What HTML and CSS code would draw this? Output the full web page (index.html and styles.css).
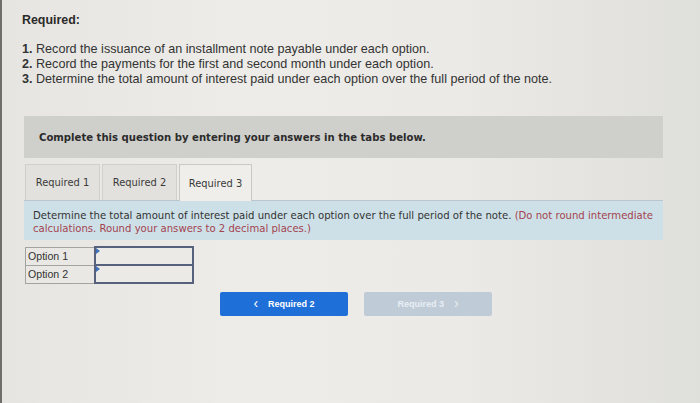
FILE: index.html
```html
<!DOCTYPE html>
<html>
<head>
<meta charset="utf-8">
<link rel="stylesheet" href="styles.css">
</head>
<body>
<div class="page">
  <div class="req-title">Required:</div>
  <ol class="req-list">
    <li><span class="num">1.</span>Record the issuance of an installment note payable under each option.</li>
    <li><span class="num">2.</span>Record the payments for the first and second month under each option.</li>
    <li><span class="num">3.</span>Determine the total amount of interest paid under each option over the full period of the note.</li>
  </ol>
  <div class="prompt">Complete this question by entering your answers in the tabs below.</div>
  <div class="tabs">
    <div class="tab">Required 1</div>
    <div class="tab">Required 2</div>
    <div class="tab active">Required 3</div>
  </div>
  <div class="instr">Determine the total amount of interest paid under each option over the full period of the note. <span class="red">(Do not round intermediate calculations. Round your answers to 2 decimal places.)</span></div>
  <table class="answers">
    <tr><td class="lbl">Option 1</td><td class="inp"><span class="flag"></span></td></tr>
    <tr><td class="lbl">Option 2</td><td class="inp"><span class="flag"></span></td></tr>
  </table>
  <div class="nav">
    <div class="btn prev"><span class="chev">&lsaquo;</span>Required 2</div>
    <div class="btn next">Required 3<span class="chev">&rsaquo;</span></div>
  </div>
</div>
</body>
</html>
```
FILE: styles.css
```css
html, body {
  margin: 0;
  padding: 0;
}
body {
  width: 700px;
  height: 403px;
  overflow: hidden;
  background: linear-gradient(90deg, #e6e5e1 0%, #edece8 35%, #eceae6 65%, #dfdfdb 100%);
  font-family: "Liberation Sans", Arial, sans-serif;
  color: #2a2a2a;
}
.page {
  height: 403px;
  border-left: 2px solid #6e6e6c;
  box-sizing: border-box;
  padding: 12px 0 0 20px;
}
.req-title {
  font-weight: bold;
  font-size: 12.4px;
  line-height: 16px;
}
.req-list {
  list-style: none;
  margin: 14px 0 0 0;
  padding: 0;
  font-size: 12.6px;
  line-height: 15px;
  color: #333;
}
.req-list li {
  display: flex;
}
.req-list .num {
  font-weight: bold;
  width: 14px;
}
.prompt {
  margin: 29px 0 0 2px;
  width: 639px;
  height: 42px;
  box-sizing: border-box;
  background: #cfcfcb;
  padding: 0 0 0 15px;
  display: flex;
  align-items: center;
  font-family: "DejaVu Sans", Verdana, sans-serif;
  font-weight: bold;
  font-size: 10.1px;
  color: #2b2b2b;
}
.tabs {
  display: flex;
  gap: 2px;
  margin: 6px 0 0 3px;
  height: 36px;
}
.tab {
  width: 75px;
  box-sizing: border-box;
  border: 1px solid #cfcfcb;
  border-bottom: none;
  background: #e2e1dd;
  display: flex;
  align-items: center;
  justify-content: center;
  font-family: "DejaVu Sans", Verdana, sans-serif;
  font-size: 9.9px;
  color: #3a3a3a;
}
.tab.active {
  width: 73px;
  background: #efeeeb;
  border-color: #c8c8c4;
  height: 37px;
  position: relative;
  z-index: 1;
}
.instr {
  margin-left: 2px;
  width: 639px;
  height: 40px;
  box-sizing: border-box;
  background: #cde0e7;
  border-top: 1px solid #b9c7cc;
  padding: 8px 2px 0 9px;
  font-family: "DejaVu Sans", Verdana, sans-serif;
  font-size: 10.1px;
  line-height: 13px;
  color: #333;
}
.instr .red {
  color: #a3434f;
}
.answers {
  margin: 6px 0 0 3px;
  border-collapse: collapse;
}
.answers td {
  height: 18px;
  padding: 0;
  box-sizing: border-box;
}
.answers .lbl {
  width: 69px;
  border: 1px solid #a3a39f;
  background: #e9e8e4;
  font-family: "Liberation Sans", Arial, sans-serif;
  font-size: 10.6px;
  padding-left: 2px;
  color: #333;
}
.answers .inp {
  width: 98px;
  border: 2px solid #56617d;
  background: #ebeae7;
  position: relative;
  vertical-align: top;
}
.flag {
  position: absolute;
  left: 0;
  top: 0;
  width: 0;
  height: 0;
  border-top: 3px solid transparent;
  border-bottom: 3px solid transparent;
  border-left: 4px solid #3f6fb8;
}
.nav {
  display: flex;
  gap: 16px;
  margin: 8px 0 0 198px;
}
.btn {
  width: 128px;
  height: 24px;
  box-sizing: border-box;
  border-radius: 2px;
  display: flex;
  align-items: center;
  justify-content: center;
  font-weight: bold;
  font-size: 9px;
  color: #fff;
}
.btn.prev {
  background: #1f6fd8;
}
.btn.next {
  background: #bfcbd7;
  color: #e8eef4;
}
.chev {
  font-weight: normal;
  font-size: 14px;
  line-height: 1;
  margin: -2px 10px 0 0;
}
.btn.next .chev {
  margin: -2px 0 0 10px;
}
```
